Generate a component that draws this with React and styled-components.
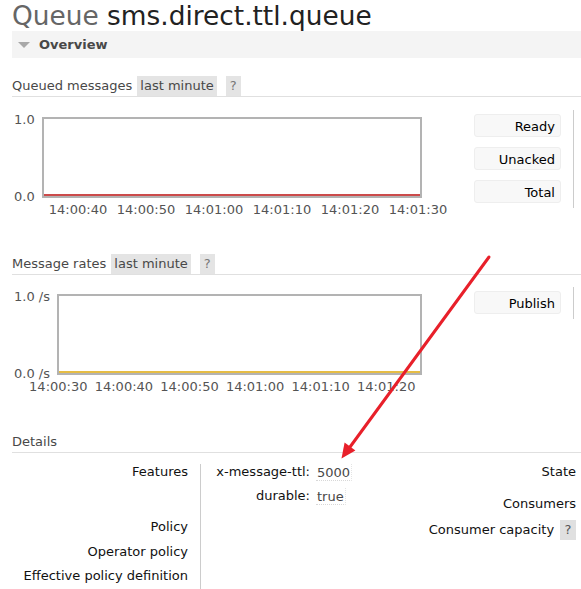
import React from 'react';
import styled, { createGlobalStyle } from 'styled-components';

const GlobalStyle = createGlobalStyle`
  body {
    margin: 0;
    background: #fff;
    font-family: "DejaVu Sans", Verdana, sans-serif;
    font-size: 13px;
    color: #484848;
  }
`;

const Page = styled.div`
  position: relative;
  width: 581px;
  height: 589px;
  overflow: hidden;
  padding-left: 12px;
  box-sizing: border-box;
`;

const Title = styled.h1`
  margin: 0;
  height: 31px;
  font-size: 26.4px;
  line-height: 32px;
  font-weight: normal;
  color: #222;
  white-space: nowrap;
  span {
    color: #666;
  }
`;

const SectionBar = styled.div`
  display: flex;
  align-items: center;
  height: 27px;
  padding-left: 6px;
  background: #f4f4f4;
  font-weight: bold;
  color: #484848;
`;

const Triangle = styled.span`
  width: 0;
  height: 0;
  margin-right: 9px;
  border-left: 6.5px solid transparent;
  border-right: 6.5px solid transparent;
  border-top: 6px solid #a8a8a8;
`;

const Heading = styled.div`
  display: flex;
  align-items: center;
  height: 21px;
  margin-top: ${({ $top }) => $top}px;
  border-bottom: 1px solid #e0e0e0;
  white-space: nowrap;
`;

const Tag = styled.span`
  align-self: flex-end;
  margin-left: ${({ $help }) => ($help ? 9 : 5)}px;
  padding: 0 ${({ $help }) => ($help ? 4 : 3)}px;
  line-height: 20px;
  background: #e4e4e4;
  color: ${({ $help }) => ($help ? '#777' : '#484848')};
`;

const ChartRow = styled.div`
  display: flex;
  align-items: flex-start;
  margin-top: ${({ $top }) => $top}px;
  padding-right: 7px;
`;

const YAxis = styled.div`
  flex: none;
  display: flex;
  flex-direction: column;
  justify-content: space-between;
  width: ${({ $width }) => $width}px;
  height: 92px;
  margin-top: 2px;
  padding-left: 2px;
  box-sizing: border-box;
  line-height: 15px;
  color: #545454;
  white-space: nowrap;
`;

const ChartCol = styled.div`
  flex: none;
  margin-top: 7px;
`;

const PlotBox = styled.div`
  position: relative;
  width: ${({ $width }) => $width}px;
  height: 81px;
  box-sizing: border-box;
  border: 2px solid #b3b3b3;
  &::after {
    content: '';
    position: absolute;
    left: 0;
    right: 0;
    bottom: 0;
    height: 2px;
    background: ${({ $line }) => $line};
  }
`;

const XAxis = styled.div`
  display: flex;
  margin-top: 4px;
  margin-left: ${({ $offset }) => $offset}px;
  line-height: 15px;
  color: #545454;
  span {
    flex: none;
    width: ${({ $step }) => $step}px;
    text-align: center;
  }
`;

const Legend = styled.div`
  margin-left: auto;
  display: flex;
  flex-direction: column;
  gap: 10px;
  height: ${({ $height }) => $height}px;
  padding: 4px 12px 0 0;
  box-sizing: border-box;
  border-right: 1px solid #ccc;
`;

const LegendButton = styled.div`
  width: 87px;
  height: 23px;
  box-sizing: border-box;
  padding: 1px 5px 0 0;
  border: 1px solid #eee;
  border-radius: 3px;
  background: #f8f8f8;
  text-align: right;
  line-height: 21px;
  color: #000;
`;

const DetailsRow = styled.div`
  display: flex;
  align-items: flex-start;
  margin-top: 11px;
  padding-right: 5px;
  line-height: 16px;
`;

const InfoGrid = styled.div`
  display: grid;
  grid-template-columns: 188px auto;
`;

const InfoLabel = styled.div`
  padding: 0 12px ${({ $pb }) => $pb}px 0;
  text-align: right;
  color: #111;
  white-space: nowrap;
`;

const InfoValue = styled.div`
  padding: 0 0 ${({ $pb }) => $pb}px 13px;
  border-left: 1px solid #ccc;
`;

const KeyValues = styled.div`
  display: grid;
  grid-template-columns: 96px auto;
  column-gap: 6px;
  grid-auto-rows: 24px;
`;

const Key = styled.div`
  text-align: right;
  color: #111;
  white-space: nowrap;
`;

const Value = styled.span`
  justify-self: start;
  height: 17px;
  padding: 1px 1px 0;
  box-sizing: border-box;
  border-bottom: 1px dotted #d8d8d8;
  border-right: 1px dotted #e4e4e4;
  color: #484848;
`;

const SideList = styled.div`
  margin-left: auto;
  display: flex;
  flex-direction: column;
  align-items: flex-end;
`;

const SideItem = styled.div`
  display: flex;
  align-items: center;
  height: ${({ $height }) => $height}px;
  margin-top: ${({ $top }) => $top || 0}px;
  color: #111;
  white-space: nowrap;
`;

const HelpTag = styled.span`
  margin-left: 6px;
  padding: 0 4.5px;
  line-height: 20px;
  background: #e0e0e0;
  color: #555;
`;

const Overlay = styled.svg`
  position: absolute;
  left: 0;
  top: 0;
  pointer-events: none;
`;

const queuedTimes = ['14:00:40', '14:00:50', '14:01:00', '14:01:10', '14:01:20', '14:01:30'];
const rateTimes = ['14:00:30', '14:00:40', '14:00:50', '14:01:00', '14:01:10', '14:01:20'];

export default function App() {
  return (
    <Page>
      <GlobalStyle />
      <Title>
        <span>Queue</span> sms.direct.ttl.queue
      </Title>
      <SectionBar>
        <Triangle />
        Overview
      </SectionBar>

      <Heading $top={17}>
        Queued messages
        <Tag>last minute</Tag>
        <Tag $help>?</Tag>
      </Heading>
      <ChartRow $top={13}>
        <YAxis $width={30}>
          <span>1.0</span>
          <span>0.0</span>
        </YAxis>
        <ChartCol>
          <PlotBox $width={380} $line="#cc4b4b" />
          <XAxis $offset={2} $step={68}>
            {queuedTimes.map((t) => (
              <span key={t}>{t}</span>
            ))}
          </XAxis>
        </ChartCol>
        <Legend $height={98}>
          <LegendButton>Ready</LegendButton>
          <LegendButton>Unacked</LegendButton>
          <LegendButton>Total</LegendButton>
        </Legend>
      </ChartRow>

      <Heading $top={36}>
        Message rates
        <Tag>last minute</Tag>
        <Tag $help>?</Tag>
      </Heading>
      <ChartRow $top={12}>
        <YAxis $width={45}>
          <span>1.0 /s</span>
          <span>0.0 /s</span>
        </YAxis>
        <ChartCol>
          <PlotBox $width={365} $line="#e6bd45" />
          <XAxis $offset={-31.5} $step={65.6}>
            {rateTimes.map((t) => (
              <span key={t}>{t}</span>
            ))}
          </XAxis>
        </ChartCol>
        <Legend $height={32}>
          <LegendButton>Publish</LegendButton>
        </Legend>
      </ChartRow>

      <Heading $top={37}>Details</Heading>
      <DetailsRow>
        <InfoGrid>
          <InfoLabel $pb={7}>Features</InfoLabel>
          <InfoValue $pb={7}>
            <KeyValues>
              <Key>x-message-ttl:</Key>
              <Value>5000</Value>
              <Key>durable:</Key>
              <Value>true</Value>
            </KeyValues>
          </InfoValue>
          <InfoLabel $pb={9}>Policy</InfoLabel>
          <InfoValue $pb={9} />
          <InfoLabel $pb={8}>Operator policy</InfoLabel>
          <InfoValue $pb={8} />
          <InfoLabel $pb={12}>Effective policy definition</InfoLabel>
          <InfoValue $pb={12} />
        </InfoGrid>
        <SideList>
          <SideItem $height={16}>State</SideItem>
          <SideItem $height={16} $top={16}>Consumers</SideItem>
          <SideItem $height={20} $top={8}>
            Consumer capacity
            <HelpTag>?</HelpTag>
          </SideItem>
        </SideList>
      </DetailsRow>

      <Overlay width="581" height="589" viewBox="0 0 581 589">
        <line x1="489" y1="257" x2="350" y2="447" stroke="#e8202a" strokeWidth="3" strokeLinecap="round" />
        <polygon points="341.5,458.5 344.6,442.6 355.4,450.6" fill="#e8202a" />
      </Overlay>
    </Page>
  );
}
